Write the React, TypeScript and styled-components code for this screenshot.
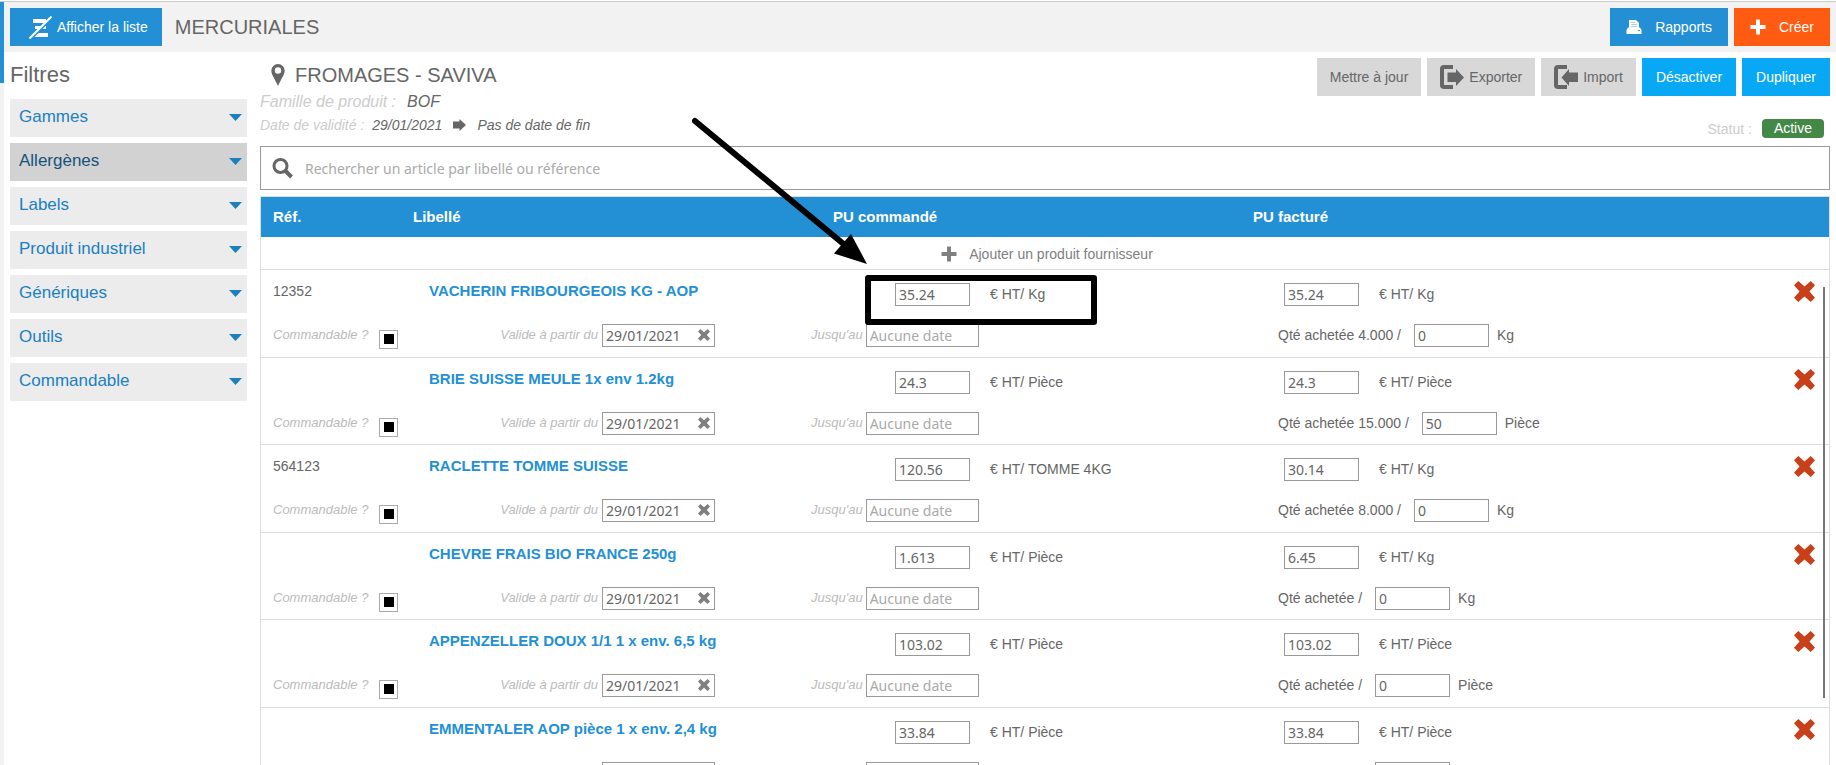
import React from 'react';
import styled, { createGlobalStyle, css } from 'styled-components';

const sans = '"Liberation Sans", Arial, sans-serif';
const field = '"Noto Sans", Tahoma, sans-serif';

const GlobalStyle = createGlobalStyle`
  *, *::before, *::after { box-sizing: border-box; }
  body { margin: 0; background: #fff; color: #666; font-family: ${sans}; font-size: 14px; }
  button, input { font: inherit; color: inherit; margin: 0; }
  h1, h2, ul { margin: 0; padding: 0; font-weight: normal; }
  svg { display: block; flex: none; }
`;

const Shell = styled.div`
  position: relative;
  display: flex;
  height: 100vh;
  overflow: hidden;
  padding-top: 1px;
`;

const Rail = styled.div`
  flex: none;
  width: 4px;
  border-top: 1px solid #ccc;
  background: #f2f2f2;
`;

const RailMark = styled.div`
  height: 81px;
  background: #2390d6;
`;

const Content = styled.div`
  flex: 1;
  min-width: 0;
  border-top: 1px solid #ccc;
`;

const TopBar = styled.header`
  display: flex;
  align-items: center;
  gap: 6px;
  padding: 6px;
  background: #f2f2f2;
`;

const PageTitle = styled.h1`
  flex: 1;
  padding-left: 7px;
  font-size: 20px;
  line-height: 30px;
`;

type Tone = 'blue' | 'orange' | 'grey' | 'sky';
const tones: Record<Tone, [string, string, number]> = {
  blue: ['#2390d6', '#fff', 16],
  orange: ['#ff5b12', '#fff', 16],
  grey: ['#d8d8d8', '#666', 13],
  sky: ['#08a8f4', '#fff', 14],
};

const Button = styled.button<{ $tone: Tone; $gap?: number }>`
  display: flex;
  align-items: center;
  gap: ${(p) => p.$gap ?? 5}px;
  height: 38px;
  padding: 0 ${(p) => tones[p.$tone][2]}px;
  border: 0;
  background: ${(p) => tones[p.$tone][0]};
  color: ${(p) => tones[p.$tone][1]};
  white-space: nowrap;
  cursor: pointer;
`;

const ListButton = styled(Button)`
  padding: 0 14px 0 19px;
`;

const Body = styled.div`
  display: flex;
  gap: 13px;
  padding: 6px 6px 0;
`;

const Sidebar = styled.aside`
  flex: none;
  width: 237px;
`;

const SideTitle = styled.h2`
  font-size: 22px;
  line-height: 34px;
`;

const FilterList = styled.ul`
  display: flex;
  flex-direction: column;
  gap: 6px;
  padding-top: 7px;
  list-style: none;
`;

const FilterButton = styled.button<{ $active: boolean }>`
  display: flex;
  align-items: center;
  justify-content: space-between;
  width: 100%;
  height: 38px;
  padding: 0 5px 2px 9px;
  border: 0;
  background: ${(p) => (p.$active ? '#d2d2d2' : '#ececec')};
  color: ${(p) => (p.$active ? '#15527c' : '#1b80c0')};
  font-size: 17px;
  cursor: pointer;
`;

const Main = styled.main`
  flex: 1;
  min-width: 0;
`;

const Summary = styled.section`
  display: flex;
  justify-content: space-between;
  margin-bottom: 8px;
`;

const Heading = styled.h2`
  display: flex;
  align-items: center;
  gap: 10px;
  padding-left: 11px;
  font-size: 20px;
  line-height: 34px;
`;

const Family = styled.div`
  display: flex;
  gap: 11px;
  font-size: 16px;
  font-style: italic;
  line-height: 20px;
`;

const Validity = styled.div`
  display: flex;
  align-items: center;
  font-style: italic;
  line-height: 26px;
  gap: 8px;
  svg { margin: 0 3px; }
`;

const Muted = styled.span`
  color: #ccc;
`;

const Actions = styled.div`
  display: flex;
  flex-direction: column;
  justify-content: space-between;
`;

const ActionRow = styled.div`
  display: flex;
  gap: 6px;
`;

const Status = styled.div`
  display: flex;
  align-items: center;
  justify-content: flex-end;
  gap: 10px;
  padding-right: 6px;
`;

const Badge = styled.span`
  padding: 0 12px;
  border-radius: 4px;
  background: #448848;
  color: #fff;
  line-height: 19px;
`;

const SearchBox = styled.label`
  display: flex;
  align-items: center;
  gap: 12px;
  height: 44px;
  margin-bottom: 6px;
  padding: 0 11px;
  border: 1px solid #999;
`;

const SearchInput = styled.input`
  flex: 1;
  min-width: 0;
  padding: 0;
  border: 0;
  outline: 0;
  background: none;
  font-family: ${field};
  &::placeholder { color: #aaa; opacity: 1; }
`;

const TableFrame = styled.div`
  position: relative;
  border: 1px solid #ddd;
`;

const ScrollThumb = styled.div`
  position: absolute;
  top: 90px;
  right: 4px;
  width: 2px;
  height: 411px;
  background: #777;
`;

const Table = styled.table`
  width: 100%;
  table-layout: fixed;
  border-collapse: collapse;
`;

const Th = styled.th<{ $indent?: boolean }>`
  height: 40px;
  padding: 0 0 2px ${(p) => (p.$indent ? 32 : 12)}px;
  background: #2390d6;
  color: #fff;
  font-size: 15px;
  text-align: left;
`;

const AddCell = styled.td`
  height: 32px;
  padding: 0;
  border-bottom: 1px solid #ddd;
`;

const AddButton = styled.button`
  display: flex;
  align-items: center;
  gap: 12px;
  margin: 0 auto;
  padding: 2px 0 0 4px;
  border: 0;
  background: none;
  color: #808080;
  cursor: pointer;
`;

const ProductRow = styled.tr`
  height: 88px;
  &:nth-child(odd) { height: 87px; }
`;

const Td = styled.td`
  padding: 13px 0 0;
  border-bottom: 1px solid #ddd;
  vertical-align: top;
  white-space: nowrap;
`;

const DeleteTd = styled(Td)`
  padding: 11px 0 0 13px;
`;

const Line = styled.div<{ $left: number; $gap?: number; $top?: boolean }>`
  display: flex;
  align-items: ${(p) => (p.$top ? 'flex-start' : 'center')};
  gap: ${(p) => p.$gap ?? 0}px;
  height: 23px;
  padding-left: ${(p) => p.$left}px;
  & + & { margin-top: 18px; }
`;

const DateLine = styled(Line)`
  justify-content: flex-end;
  padding-right: 86px;
`;

const ProductLink = styled.a`
  color: #2390d6;
  font-size: 15px;
  line-height: 16px;
  font-weight: bold;
  text-decoration: none;
`;

const Hint = styled.label`
  color: #bbb;
  font-size: 13px;
  font-style: italic;
  line-height: 22px;
`;

const QuantityLabel = styled.label`
  padding-right: 5px;
`;

const Check = styled.input`
  appearance: none;
  width: 19px;
  height: 19px;
  margin-top: 6px;
  border: 1px solid #aaa;
  background: #fff;
  &:checked {
    background: linear-gradient(#000, #000) center / 10px 10px no-repeat;
  }
`;

const boxed = css`
  height: 23px;
  border: 1px solid #999;
  background: #fff;
  font-family: ${field};
`;

const NumberInput = styled.input`
  ${boxed}
  width: 75px;
  padding: 0 3px;
`;

const DateBox = styled.div`
  ${boxed}
  display: flex;
  align-items: center;
  width: 113px;
  padding: 0 4px 0 3px;
`;

const DateInput = styled.input`
  flex: 1;
  min-width: 0;
  padding: 0;
  border: 0;
  background: none;
  &::placeholder { color: #aaa; opacity: 1; }
`;

const IconButton = styled.button`
  display: block;
  padding: 0;
  border: 0;
  background: none;
  cursor: pointer;
`;

const Annotation = styled.svg`
  position: absolute;
  top: 0;
  left: 0;
  pointer-events: none;
`;

const Caret = () => (
  <svg width="13" height="7" viewBox="0 0 13 7"><path d="M0 0h13L6.5 7z" fill="#1b80c0" /></svg>
);

const Cross = ({ size, color }: { size: number; color: string }) => (
  <svg width={size} height={size} viewBox="0 0 22 22">
    <path d="M4.500 0 11 5.800 17.500 0 22 4.500 16.200 11 22 17.500 17.500 22 11 16.200 4.500 22 0 17.500 5.800 11 0 4.500z" fill={color} />
  </svg>
);

const Plus = ({ color }: { color: string }) => (
  <svg width="16" height="16" viewBox="0 0 16 16">
    <path d="M6 0.5h4V6h5.5v4H10v5.5H6V10H.5V6H6z" fill={color} />
  </svg>
);

const ListOff = () => (
  <svg width="23" height="23" viewBox="0 0 23 23">
    <path d="M4 3h13v4H4zM6 10h11v3H6zM4 17h15v4H4z" fill="#fff" />
    <path d="M2 22.500 22.500 2" stroke="#2390d6" strokeWidth="3" />
    <path d="M0.500 22.500 22.500 0.500" stroke="#fff" strokeWidth="2" />
  </svg>
);

const Printer = () => (
  <svg width="16" height="14" viewBox="0 0 16 14">
    <path d="M3 0h7l3 3v5H3z" fill="#fff" />
    <path d="M5 2.500h4M5 4.500h6M5 6.500h6" stroke="#2390d6" strokeWidth="1" opacity=".4" />
    <path d="M2 7.500h12l1.500 2.500v4H.5v-4z" fill="#fff" />
    <path d="M12 10.500h2" stroke="#2390d6" />
  </svg>
);

const Pin = () => (
  <svg width="14" height="22" viewBox="0 0 14 22">
    <path fillRule="evenodd" d="M7 0a6.700 6.700 0 0 1 6.700 6.700C13.700 10.500 9.500 16 7 22 4.500 16 .3 10.500.3 6.700A6.700 6.700 0 0 1 7 0zm0 3.300a3.200 3.200 0 1 0 0 6.400 3.200 3.200 0 0 0 0-6.400z" fill="#666" />
  </svg>
);

const ArrowRight = () => (
  <svg width="13" height="12" viewBox="0 0 13 12"><path d="M0 2.500h6.500V0L13 6l-6.500 6V9.500H0z" fill="#666" /></svg>
);

const Magnifier = () => (
  <svg width="21" height="21" viewBox="0 0 21 21" fill="none" stroke="#666">
    <circle cx="8.500" cy="8" r="6.500" strokeWidth="3" />
    <path d="M13 12.500 19.500 19" strokeWidth="4" />
  </svg>
);

const Transfer = ({ inward }: { inward?: boolean }) => (
  <svg width="24" height="24" viewBox="0 0 24 24">
    <path d="M13 2H4Q2 2 2 4v16Q2 22 4 22H13" fill="none" stroke="#666" strokeWidth="4" />
    <path d={inward ? 'M24 7.500H15V4L7.500 12.500 15 21v-4h9z' : 'M7.500 7.500H16V4l8 8.500-8 8.500v-4H7.500z'} fill="#666" />
  </svg>
);

const filters = ['Gammes', 'Allergènes', 'Labels', 'Produit industriel', 'Génériques', 'Outils', 'Commandable'];

interface Product {
  code: string;
  name: string;
  ordered: string;
  orderedUnit: string;
  billed: string;
  billedUnit: string;
  bought: string;
  qty: string;
}

const products: Product[] = [
  { code: '12352', name: 'VACHERIN FRIBOURGEOIS KG - AOP', ordered: '35.24', orderedUnit: 'Kg', billed: '35.24', billedUnit: 'Kg', bought: '4.000 ', qty: '0' },
  { code: '', name: 'BRIE SUISSE MEULE 1x env 1.2kg', ordered: '24.3', orderedUnit: 'Pièce', billed: '24.3', billedUnit: 'Pièce', bought: '15.000 ', qty: '50' },
  { code: '564123', name: 'RACLETTE TOMME SUISSE', ordered: '120.56', orderedUnit: 'TOMME 4KG', billed: '30.14', billedUnit: 'Kg', bought: '8.000 ', qty: '0' },
  { code: '', name: 'CHEVRE FRAIS BIO FRANCE 250g', ordered: '1.613', orderedUnit: 'Pièce', billed: '6.45', billedUnit: 'Kg', bought: '', qty: '0' },
  { code: '', name: 'APPENZELLER DOUX 1/1 1 x env. 6,5 kg', ordered: '103.02', orderedUnit: 'Pièce', billed: '103.02', billedUnit: 'Pièce', bought: '', qty: '0' },
  { code: '', name: 'EMMENTALER AOP pièce 1 x env. 2,4 kg', ordered: '33.84', orderedUnit: 'Pièce', billed: '33.84', billedUnit: 'Pièce', bought: '', qty: '0' },
];

const ProductItem = ({ item, index }: { item: Product; index: number }) => (
  <ProductRow>
    <Td>
      <Line $left={12} $top>{item.code}</Line>
      <Line $left={12} $gap={11} $top>
        <Hint htmlFor={`orderable-${index}`}>Commandable ?</Hint>
        <Check id={`orderable-${index}`} type="checkbox" defaultChecked />
      </Line>
    </Td>
    <Td>
      <Line $left={28} $top><ProductLink href="#">{item.name}</ProductLink></Line>
      <DateLine $left={0} $gap={4}>
        <Hint htmlFor={`from-${index}`}>Valide à partir du</Hint>
        <DateBox>
          <DateInput id={`from-${index}`} defaultValue="29/01/2021" />
          <IconButton aria-label="Effacer la date"><Cross size={12} color="#808080" /></IconButton>
        </DateBox>
      </DateLine>
    </Td>
    <Td>
      <Line $left={94} $gap={20}>
        <NumberInput id={`ordered-${index}`} aria-label="PU commandé" defaultValue={item.ordered} />
        <label htmlFor={`ordered-${index}`}>€ HT/ {item.orderedUnit}</label>
      </Line>
      <Line $left={10} $gap={3}>
        <Hint htmlFor={`until-${index}`}>Jusqu'au</Hint>
        <DateBox><DateInput id={`until-${index}`} placeholder="Aucune date" /></DateBox>
      </Line>
    </Td>
    <Td>
      <Line $left={43} $gap={20}>
        <NumberInput id={`billed-${index}`} aria-label="PU facturé" defaultValue={item.billed} />
        <label htmlFor={`billed-${index}`}>€ HT/ {item.billedUnit}</label>
      </Line>
      <Line $left={37} $gap={8}>
        <QuantityLabel htmlFor={`qty-${index}`}>Qté achetée {item.bought}/</QuantityLabel>
        <NumberInput id={`qty-${index}`} defaultValue={item.qty} />
        <span>{item.billedUnit}</span>
      </Line>
    </Td>
    <DeleteTd>
      <IconButton aria-label={`Supprimer ${item.name}`}><Cross size={21} color="#c8401a" /></IconButton>
    </DeleteTd>
  </ProductRow>
);

export default function App() {
  return (
    <>
      <GlobalStyle />
      <Shell>
        <Rail><RailMark /></Rail>
        <Content>
          <TopBar>
            <ListButton $tone="blue"><ListOff />Afficher la liste</ListButton>
            <PageTitle>MERCURIALES</PageTitle>
            <Button $tone="blue" $gap={13}><Printer />Rapports</Button>
            <Button $tone="orange" $gap={13}><Plus color="#fff" />Créer</Button>
          </TopBar>
          <Body>
            <Sidebar>
              <SideTitle>Filtres</SideTitle>
              <FilterList>
                {filters.map((name) => (
                  <li key={name}>
                    <FilterButton $active={name === 'Allergènes'}>{name}<Caret /></FilterButton>
                  </li>
                ))}
              </FilterList>
            </Sidebar>
            <Main>
              <Summary>
                <div>
                  <Heading><Pin />FROMAGES - SAVIVA</Heading>
                  <Family><Muted>Famille de produit :</Muted><span>BOF</span></Family>
                  <Validity>
                    <Muted>Date de validité :</Muted><span>29/01/2021</span>
                    <ArrowRight /><span>Pas de date de fin</span>
                  </Validity>
                </div>
                <Actions>
                  <ActionRow>
                    <Button $tone="grey">Mettre à jour</Button>
                    <Button $tone="grey"><Transfer />Exporter</Button>
                    <Button $tone="grey"><Transfer inward />Import</Button>
                    <Button $tone="sky">Désactiver</Button>
                    <Button $tone="sky">Dupliquer</Button>
                  </ActionRow>
                  <Status><Muted>Statut :</Muted><Badge>Active</Badge></Status>
                </Actions>
              </Summary>
              <SearchBox>
                <Magnifier />
                <SearchInput aria-label="Rechercher un article" placeholder="Rechercher un article par libellé ou référence" />
              </SearchBox>
              <TableFrame>
                <Table>
                  <colgroup>
                    <col width="140" /><col width="400" /><col width="440" /><col /><col width="48" />
                  </colgroup>
                  <thead>
                    <tr>
                      <Th>Réf.</Th><Th>Libellé</Th><Th $indent>PU commandé</Th><Th>PU facturé</Th><Th aria-label="Actions" />
                    </tr>
                  </thead>
                  <tbody>
                    <tr>
                      <AddCell colSpan={5}>
                        <AddButton><Plus color="#808080" />Ajouter un produit fournisseur</AddButton>
                      </AddCell>
                    </tr>
                    {products.map((item, i) => <ProductItem key={item.name} item={item} index={i} />)}
                  </tbody>
                </Table>
                <ScrollThumb />
              </TableFrame>
            </Main>
          </Body>
        </Content>
        <Annotation width="1100" height="330" viewBox="0 0 1100 330">
          <path d="M695 121 846 246" stroke="#000" strokeWidth="6" strokeLinecap="round" />
          <path d="M867 264 851 234 834 253.500z" fill="#000" />
          <rect x="868" y="278" width="226" height="44" fill="none" stroke="#000" strokeWidth="6" strokeLinejoin="round" />
        </Annotation>
      </Shell>
    </>
  );
}
